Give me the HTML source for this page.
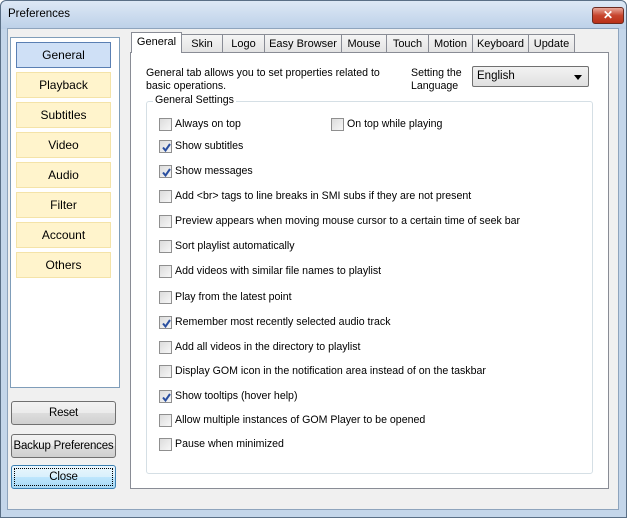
<!DOCTYPE html><html><head><style>
*{box-sizing:border-box}body{margin:0;width:627px;height:518px;overflow:hidden;font-family:"Liberation Sans",sans-serif;font-size:10.6px;color:#000}
.win{position:absolute;left:0;top:0;width:627px;height:518px;background:#c4d6ea;border:1px solid #5a6f86;border-radius:6px 6px 0 0}
.title{position:absolute;left:0;top:0;width:625px;height:28px;background:linear-gradient(#dde8f5,#bcd0e8);border-radius:6px 6px 0 0}
.title span{position:absolute;left:7px;top:7px;font-size:11.5px}
.x{position:absolute;left:591px;top:6px;width:32px;height:17px;border:1px solid #6b2a20;border-radius:3px;background:linear-gradient(#e9a99b,#c7452e 50%,#b93017);color:#fff;font-weight:bold;text-align:center;font-size:12px;line-height:15px}
.client{position:absolute;left:7px;top:28px;width:612px;height:482px;background:#f0f0f0;border:1px solid #8ea4bd}
.a{position:absolute}
.lp{left:10px;top:37px;width:110px;height:351px;background:#fff;border:1px solid #7f9db9}
.nb{position:absolute;left:16px;width:95px;height:26px;background:#fff4cc;border:1px solid #f4e3a8;text-align:center;line-height:25px;font-size:12px}
.nb.s{background:#cfe0f6;border-color:#5a7fb3}
.btn{position:absolute;left:11px;width:105px;height:24px;border:1px solid #707070;border-radius:3px;background:linear-gradient(#f2f2f2,#ebebeb 50%,#dddddd 51%,#cfcfcf);text-align:center;line-height:22px;font-size:11.5px;white-space:nowrap;letter-spacing:-0.2px}
.panel{left:130px;top:52px;width:479px;height:437px;background:#fff;border:1px solid #898c95}
.tab{position:absolute;top:34px;height:19px;background:linear-gradient(#f5f5f5,#e3e3e3);border:1px solid #898c95;text-align:center;line-height:18px;font-size:11px}
.tab.s{top:32px;height:21px;background:#fff;border-bottom:none;z-index:2}
.grp{left:146px;top:101px;width:447px;height:373px;border:1px solid #d5dfe5;border-radius:3px}
.cb{position:absolute;width:13px;height:13px;border:1px solid #8f8f8f;background:linear-gradient(135deg,#dcdcdc,#f7f7f7)}
.cb svg{position:absolute;left:1px;top:1px}
.lb{position:absolute;font-size:10.6px;white-space:nowrap}
</style></head><body>
<div class="win"><div class="title"><span>Preferences</span><div class="x">✕</div></div></div>
<div class="client"></div>
<div class="a lp"></div>
<div class="nb s" style="top:42px">General</div>
<div class="nb" style="top:72px">Playback</div>
<div class="nb" style="top:102px">Subtitles</div>
<div class="nb" style="top:132px">Video</div>
<div class="nb" style="top:162px">Audio</div>
<div class="nb" style="top:192px">Filter</div>
<div class="nb" style="top:222px">Account</div>
<div class="nb" style="top:252px">Others</div>
<div class="btn" style="top:401px">Reset</div>
<div class="btn" style="top:434px">Backup Preferences</div>
<div class="btn" style="top:465px;border-color:#3c7fb1;outline:1px dotted #000;outline-offset:-4px;background:linear-gradient(#eaf6fd,#d9f0fc 50%,#bee6fd 51%,#a7d9f5)">Close</div>
<div class="a panel"></div>
<div class="tab s" style="left:131px;width:51px">General</div>
<div class="tab" style="left:181px;width:42px">Skin</div>
<div class="tab" style="left:222px;width:43px">Logo</div>
<div class="tab" style="left:264px;width:78px">Easy Browser</div>
<div class="tab" style="left:341px;width:46px">Mouse</div>
<div class="tab" style="left:386px;width:43px">Touch</div>
<div class="tab" style="left:428px;width:45px">Motion</div>
<div class="tab" style="left:472px;width:57px">Keyboard</div>
<div class="tab" style="left:528px;width:47px">Update</div>
<div class="lb" style="left:146px;top:67px;line-height:13px">General tab allows you to set properties related to<br>basic operations.</div>
<div class="lb" style="left:411px;top:67px;line-height:13px">Setting the<br>Language</div>
<div class="a" style="left:472px;top:66px;width:117px;height:21px;border:1px solid #707070;border-radius:2px;background:linear-gradient(#f2f2f2,#e0e0e0)"><span style="position:absolute;left:4px;top:3px;font-size:11.5px">English</span><span style="position:absolute;right:6px;top:8px;border:4px solid transparent;border-top:5px solid #000"></span></div>
<div class="a grp"></div>
<div class="lb" style="left:153px;top:94px;background:#fff;padding:0 2px">General Settings</div>
<div id="c"></div>
<script>
var r=[["Always on top",124,0],["Show subtitles",146,1],["Show messages",171,1],["Add <br> tags to line breaks in SMI subs if they are not present",196,0],["Preview appears when moving mouse cursor to a certain time of seek bar",221,0],["Sort playlist automatically",246,0],["Add videos with similar file names to playlist",271,0],["Play from the latest point",297,0],["Remember most recently selected audio track",322,1],["Add all videos in the directory to playlist",347,0],["Display GOM icon in the notification area instead of on the taskbar",371,0],["Show tooltips (hover help)",396,1],["Allow multiple instances of GOM Player to be opened",420,0],["Pause when minimized",444,0]];
var h="";function cb(x,y,t,c){h+='<div class="cb" style="left:'+x+'px;top:'+(y-6)+'px">'+(c?'<svg width="11" height="11"><path d="M2 5.5L4.5 8.5L9 2" stroke="#2a4fa0" stroke-width="2" fill="none"/></svg>':'')+'</div><div class="lb" style="left:'+(x+16)+'px;top:'+(y-6)+'px"></div>';}
r.forEach(function(a){cb(159,a[1],a[0],a[2]);});cb(331,124,"On top while playing",0);
document.getElementById("c").innerHTML=h;
var l=document.querySelectorAll("#c .lb"),t=r.map(function(a){return a[0]});t.push("On top while playing");
l.forEach(function(e,i){e.textContent=t[i];});
</script>
</body></html>
